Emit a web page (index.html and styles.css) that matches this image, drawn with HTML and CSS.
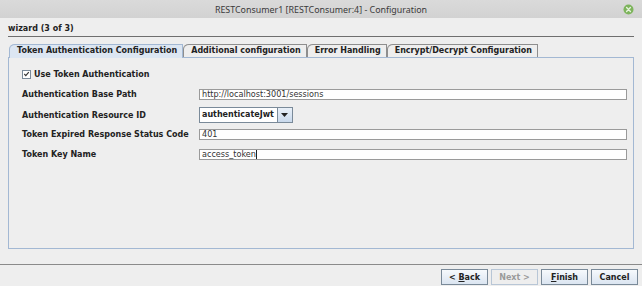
FILE: index.html
```html
<!DOCTYPE html>
<html lang="en">
<head>
    <meta charset="UTF-8">
    <title>RESTConsumer1 [RESTConsumer:4] - Configuration</title>
    <link rel="stylesheet" href="styles.css">
</head>
<body>
    <div class="window">
        <div class="titlebar">
            <span class="title">RESTConsumer1 [RESTConsumer:4] - Configuration</span>
            <span class="close">
                <svg width="11" height="11" viewBox="0 0 11 11">
                    <circle cx="5.5" cy="5.5" r="5" fill="#7db45c"/>
                    <path d="M3.6 3.6 L7.4 7.4 M7.4 3.6 L3.6 7.4" stroke="#e6f2dc" stroke-width="1.4" stroke-linecap="round"/>
                </svg>
            </span>
        </div>

        <div class="content">
            <div class="wizard-head">wizard (3 of 3)</div>

            <div class="tabs">
                <div class="tab selected">Token Authentication Configuration</div>
                <div class="tab">Additional configuration</div>
                <div class="tab">Error Handling</div>
                <div class="tab">Encrypt/Decrypt Configuration</div>
            </div>

            <div class="tab-panel">
                <div class="check-row">
                    <span class="checkbox">
                        <svg width="8" height="8" viewBox="0 0 8 8">
                            <path d="M1.5 4 L3.2 5.8 L6.6 1.8" fill="none" stroke="#333" stroke-width="1.3"/>
                        </svg>
                    </span>
                    <span class="check-label">Use Token Authentication</span>
                </div>

                <div class="form">
                    <div class="label">Authentication Base Path</div>
                    <div class="field">http://localhost:3001/sessions</div>

                    <div class="label">Authentication Resource ID</div>
                    <div class="combo-cell">
                        <div class="combo">
                            <span class="combo-value">authenticateJwt</span>
                            <span class="combo-arrow">
                                <svg width="7" height="4" viewBox="0 0 7 4"><path d="M0 0 H7 L3.5 4 Z" fill="#222"/></svg>
                            </span>
                        </div>
                    </div>

                    <div class="label">Token Expired Response Status Code</div>
                    <div class="field">401</div>

                    <div class="label">Token Key Name</div>
                    <div class="field">access_token<span class="caret"></span></div>
                </div>
            </div>
        </div>

        <div class="footer">
            <button class="btn">&lt; <u>B</u>ack</button>
            <button class="btn" disabled>Next &gt;</button>
            <button class="btn"><u>F</u>inish</button>
            <button class="btn">Cancel</button>
        </div>
    </div>
</body>
</html>
```

FILE: styles.css
```css
body {
    margin: 0;
    background-color: #eeeeee;
    font-family: 'DejaVu Sans', Verdana, sans-serif;
    color: #333333;
}

.window {
    width: 642px;
    height: 286px;
    display: flex;
    flex-direction: column;
    overflow: hidden;
}

/* Barre de titre */
.titlebar {
    height: 18px;
    flex: none;
    background: linear-gradient(#dadada, #d2d2d2);
    display: flex;
    align-items: center;
    justify-content: center;
    position: relative;
}

.title {
    font-family: 'Noto Sans', 'Liberation Sans', sans-serif;
    font-size: 8.9px;
    color: #3a3a3a;
}

.close {
    position: absolute;
    right: 8px;
    top: 4px;
    width: 11px;
    height: 11px;
    display: flex;
}

.content {
    flex: 1;
    padding: 0 8px;
    display: flex;
    flex-direction: column;
}

.wizard-head {
    margin-top: 4px;
    height: 14px;
    line-height: 14px;
    font-size: 8px;
    font-weight: bold;
    color: #222222;
    border-bottom: 1px solid #6e6e6e;
}

/* Onglets */
.tabs {
    margin-top: 7px;
    padding-left: 1px;
    display: flex;
    height: 13px;
}

.tab {
    height: 12px;
    line-height: 12px;
    padding: 0 5px 0 7px;
    font-size: 8px;
    font-weight: bold;
    color: #222222;
    border: 1px solid #8e8e8e;
    border-bottom: none;
    border-top-left-radius: 6px 5px;
    background-color: #eeeeee;
}

.tab.selected {
    background-color: #dce6f2;
    border-color: #a3b8d3;
    height: 13px;
    margin-bottom: -1px;
    position: relative;
    z-index: 1;
}

.tab-panel {
    height: 190px;
    border: 1px solid #a3b8d3;
    padding: 0 13px;
}

.check-row {
    margin-top: 11px;
    height: 10px;
    display: flex;
    align-items: center;
}

.checkbox {
    width: 7px;
    height: 7px;
    border: 1px solid #7a8a99;
    background-color: #ffffff;
    display: flex;
    align-items: center;
    justify-content: center;
    margin-right: 3px;
}

.check-label {
    font-size: 8px;
    font-weight: bold;
    color: #222222;
}

/* Formulaire */
.form {
    margin-top: 4px;
    display: grid;
    grid-template-columns: 177px 428px;
    grid-template-rows: 22px 20px 18px 22px;
    align-items: center;
}

.label {
    font-size: 8px;
    font-weight: bold;
    color: #222222;
    white-space: nowrap;
}

.field {
    height: 9px;
    line-height: 9px;
    border: 1px solid #9a9a9a;
    background-color: #ffffff;
    font-size: 8.1px;
    padding-left: 2px;
    color: #333333;
    white-space: nowrap;
    display: flex;
    align-items: center;
}

.caret {
    width: 1px;
    height: 9px;
    background-color: #222222;
}

.combo-cell {
    display: flex;
}

.combo {
    height: 14px;
    border: 1px solid #7a8a99;
    display: flex;
    background-color: #ffffff;
}

.combo-value {
    font-size: 8px;
    font-weight: bold;
    color: #222222;
    line-height: 14px;
    padding: 0 3px 0 2px;
    border-right: 1px solid #7a8a99;
}

.combo-arrow {
    width: 14px;
    background: linear-gradient(#e9f0f8, #c9d9ec);
    display: flex;
    align-items: center;
    justify-content: center;
}

/* Boutons */
.footer {
    flex: none;
    height: 22px;
    border-top: 1px solid #8a8a8a;
    display: flex;
    justify-content: flex-end;
    align-items: flex-start;
    gap: 3px;
    padding: 4px 4px 0 0;
    box-sizing: border-box;
}

.btn {
    width: 47px;
    height: 16px;
    padding: 0;
    font-family: 'DejaVu Sans', Verdana, sans-serif;
    font-size: 8px;
    font-weight: bold;
    color: #222222;
    border: 1px solid #7a8a99;
    background: linear-gradient(#f6f9fc, #dbe5f1);
}

.btn:disabled {
    color: #9a9a9a;
    border-color: #b8c6d6;
    background: #eeeeee;
}
```
